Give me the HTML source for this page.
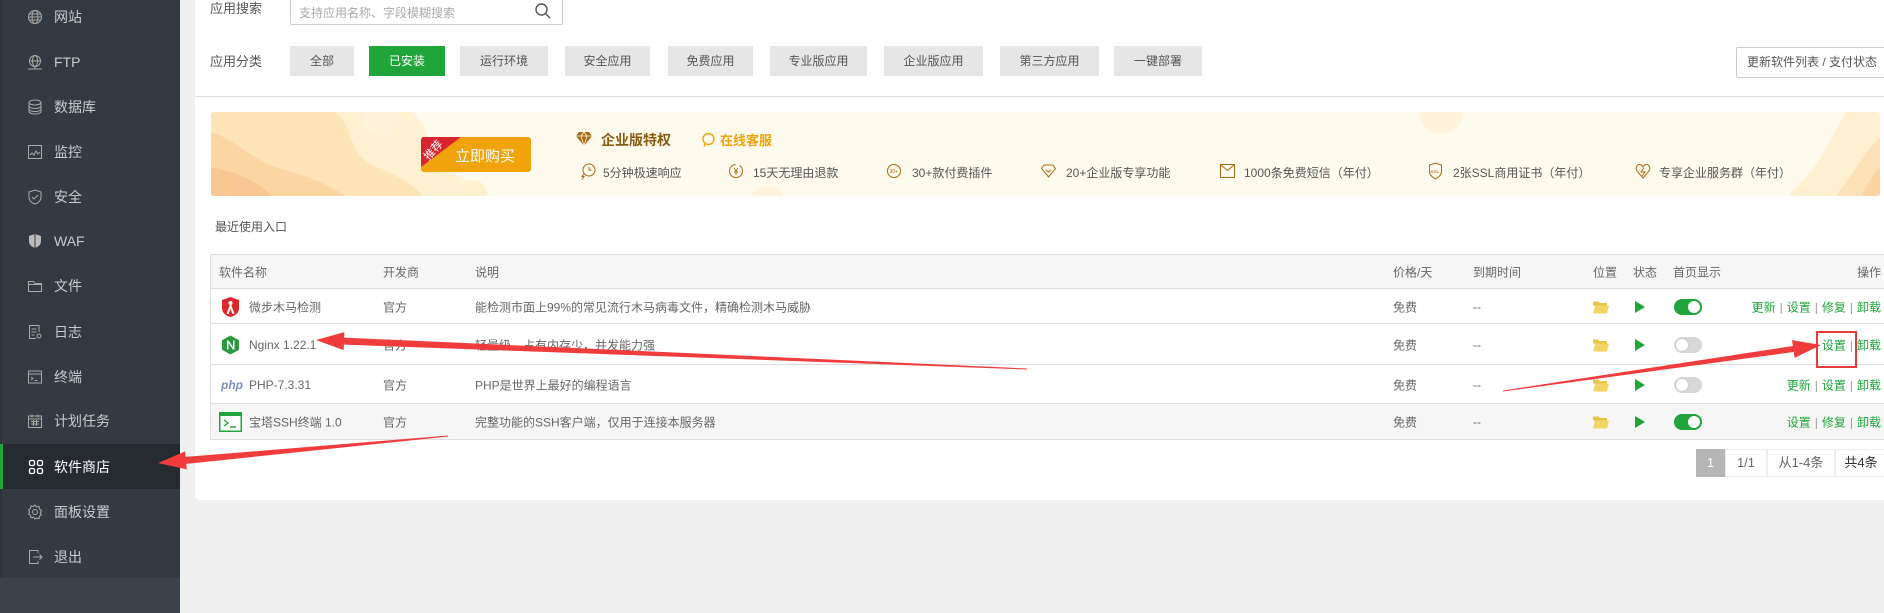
<!DOCTYPE html>
<html><head><meta charset="utf-8"><style>
*{margin:0;padding:0;box-sizing:border-box}
body{width:1884px;height:613px;overflow:hidden;background:#f0f0f0;font-family:"Liberation Sans","Noto Sans CJK SC",sans-serif;font-size:12px;color:#666;position:relative}
.a{position:absolute;white-space:nowrap}
#side{position:absolute;left:0;top:0;width:180px;height:613px;background:#3b424b}
#side .list{position:absolute;left:0;top:0;width:180px;height:578px;background:#333a42;border-left:2px solid #2e343b}
.it{position:absolute;left:0;width:180px;height:45px;color:#c8ccd0;font-size:14px}
.it span{position:absolute;left:54px;top:50%;transform:translateY(-50%)}
.it svg{position:absolute;left:27px;top:50%;transform:translateY(-50%)}
.it.on{background:#262b31;border-left:3px solid #20a53a;left:0;color:#fff}
.it.on svg{left:25px}
.it.on span{left:51px}
#panel{position:absolute;left:195px;top:0;width:1689px;height:500px;background:#fff;border-radius:0 0 0 5px}
.btn{position:absolute;top:46px;height:30px;line-height:30px;background:#e6e6e6;color:#555;text-align:center;font-size:12px}
.row{position:absolute;left:210px;width:1674px;border-bottom:1px solid #ddd}
.c{position:absolute;top:50%;transform:translateY(-50%);white-space:nowrap}
.act{right:3px;color:#20a53a}
.act i{font-style:normal;color:#999;margin:0 4px}
.tg{position:absolute;left:1674px;top:50%;transform:translateY(-50%);width:28px;height:16px;border-radius:8px}
.tg.on{background:#20a53a}.tg.off{background:#d8d8d8}
.tg b{position:absolute;top:2px;width:12px;height:12px;border-radius:50%;background:#fff}
.tg.on b{right:2px}.tg.off b{left:2px;box-shadow:0 0 1px #999}
.fd{left:1593px}.pl{left:1635px}
.feat{position:absolute;top:164px;font-size:12px;color:#555}
</style></head><body>
<div id="side"><div class="list"></div>
<div class="it" style="top:-6px"><svg width="16" height="16" viewBox="0 0 16 16" fill="none" stroke="#aaa" stroke-width="1"><circle cx="8" cy="8" r="6.5"/><ellipse cx="8" cy="8" rx="3" ry="6.5"/><path d="M1.5 8h13M2.5 5h11M2.5 11h11"/></svg><span>网站</span></div>
<div class="it" style="top:39px"><svg width="16" height="16" viewBox="0 0 16 16" fill="none" stroke="#aaa"><circle cx="8" cy="7" r="5.5"/><ellipse cx="8" cy="7" rx="2.5" ry="5.5"/><path d="M2.5 7h11M1 15h14M8 12.5v2"/></svg><span>FTP</span></div>
<div class="it" style="top:84px"><svg width="16" height="16" viewBox="0 0 16 16" fill="none" stroke="#aaa"><ellipse cx="8" cy="3.5" rx="6" ry="2.5"/><path d="M2 3.5v9c0 1.4 2.7 2.5 6 2.5s6-1.1 6-2.5v-9M2 7c0 1.4 2.7 2.5 6 2.5S14 8.4 14 7M2 10c0 1.4 2.7 2.5 6 2.5s6-1.1 6-2.5"/></svg><span>数据库</span></div>
<div class="it" style="top:129px"><svg width="16" height="16" viewBox="0 0 16 16" fill="none" stroke="#aaa"><rect x="1.5" y="1.5" width="13" height="13"/><path d="M3 11l2-2 2 2 2-4 2 3 2-2"/></svg><span>监控</span></div>
<div class="it" style="top:174px"><svg width="16" height="16" viewBox="0 0 16 16" fill="none" stroke="#aaa"><path d="M8 1l6 2v5c0 4-3 6-6 7-3-1-6-3-6-7V3z"/><path d="M5 8l2 2 4-4"/></svg><span>安全</span></div>
<div class="it" style="top:218px"><svg width="16" height="16" viewBox="0 0 16 16"><path d="M8 1l6 2v5c0 4-3 6-6 7-3-1-6-3-6-7V3z" fill="#bbb"/><path d="M8 1v14" stroke="#333a42"/></svg><span>WAF</span></div>
<div class="it" style="top:263px"><svg width="16" height="16" viewBox="0 0 16 16" fill="none" stroke="#aaa"><path d="M1.5 3.5h5l1.5 2h6.5v8h-13z"/><path d="M1.5 6.5h13"/></svg><span>文件</span></div>
<div class="it" style="top:309px"><svg width="16" height="16" viewBox="0 0 16 16" fill="none" stroke="#aaa"><path d="M12 8V1.5H2.5v13H9M4.5 5h5M4.5 8h5M4.5 11h3"/><circle cx="12" cy="12" r="2"/></svg><span>日志</span></div>
<div class="it" style="top:354px"><svg width="16" height="16" viewBox="0 0 16 16" fill="none" stroke="#aaa"><rect x="1.5" y="2" width="13" height="12"/><path d="M1.5 5h13M4 8l2 1.5L4 11M7.5 11.5h3"/></svg><span>终端</span></div>
<div class="it" style="top:398px"><svg width="16" height="16" viewBox="0 0 16 16" fill="none" stroke="#aaa"><rect x="1.5" y="3" width="13" height="11.5"/><path d="M1.5 6h13M5 1.5v3M11 1.5v3M4 8.5h8M4 11h8M6.5 7v6M9.5 7v6"/></svg><span>计划任务</span></div>
<div class="it on" style="top:444px"><svg width="16" height="16" viewBox="0 0 16 16" fill="none" stroke="#fff" stroke-width="1.3"><rect x="1.5" y="1.5" width="5" height="5" rx="1.5"/><rect x="9.5" y="1.5" width="5" height="5" rx="1.5"/><rect x="1.5" y="9.5" width="5" height="5" rx="1.5"/><rect x="9.5" y="9.5" width="5" height="5" rx="1.5"/></svg><span>软件商店</span></div>
<div class="it" style="top:489px"><svg width="16" height="16" viewBox="0 0 16 16" fill="none" stroke="#aaa"><circle cx="8" cy="8" r="2.5"/><path d="M8 1l1.5 2 2.5-.5.5 2.5 2 1.5-1.2 2.2 1.2 2.3-2 1.2-.5 2.5-2.5-.5L8 15l-1.5-1.8-2.5.5-.5-2.5-2-1.2L2.7 8 1.5 5.8l2-1.3.5-2.5 2.5.5z"/></svg><span>面板设置</span></div>
<div class="it" style="top:534px"><svg width="16" height="16" viewBox="0 0 16 16" fill="none" stroke="#aaa"><path d="M11 4V1.5H2.5v13H11V12M6 8h9M12.5 5.5L15 8l-2.5 2.5"/></svg><span>退出</span></div>
</div>

<div id="panel"></div>
<div class="a" style="left:210px;top:0;font-size:13px;color:#555;line-height:18px">应用搜索</div>
<div class="a" style="left:290px;top:-2px;width:273px;height:27px;border:1px solid #ccc;border-radius:2px;background:#fff"><span class="a" style="left:8px;top:5px;color:#aaa;font-size:12px">支持应用名称、字段模糊搜索</span><svg class="a" style="right:10px;top:3px" width="18" height="18" viewBox="0 0 18 18" fill="none" stroke="#555" stroke-width="1.4"><circle cx="7.5" cy="7.5" r="5.5"/><path d="M11.5 11.5l4.5 4.5"/></svg></div>
<div class="a" style="left:210px;top:51px;font-size:13px;color:#555">应用分类</div>
<div class="btn" style="left:290px;width:64px">全部</div>
<div class="btn" style="left:369px;width:76px;background:#20a53a;color:#fff">已安装</div>
<div class="btn" style="left:460px;width:88px">运行环境</div>
<div class="btn" style="left:565px;width:85px">安全应用</div>
<div class="btn" style="left:668px;width:85px">免费应用</div>
<div class="btn" style="left:770px;width:97px">专业版应用</div>
<div class="btn" style="left:884px;width:99px">企业版应用</div>
<div class="btn" style="left:1000px;width:99px">第三方应用</div>
<div class="btn" style="left:1114px;width:88px">一键部署</div>
<div class="a" style="left:1736px;top:47px;width:150px;height:31px;border:1px solid #ccc;border-radius:2px;line-height:29px;padding-left:10px;color:#555;background:#fff">更新软件列表 / 支付状态</div>
<div class="a" style="left:195px;top:96px;width:1689px;height:1px;background:#ddd"></div>

<!-- banner -->
<div class="a" style="left:211px;top:112px;width:1669px;height:84px;background:#fffaee;border-radius:3px;overflow:hidden">
<svg class="a" style="left:0;top:0" width="1669" height="84">
<path d="M0 0H200C225 20 215 45 240 60 258 70 270 78 275 84H0z" fill="#fff1d2"/>
<path d="M0 0H125C145 20 135 40 165 55 190 65 205 75 212 84H0z" fill="#fee5b8"/>
<path d="M0 20C30 30 40 50 80 60 110 68 128 80 135 84H0z" fill="#fcd6a2"/>
<path d="M0 55C25 60 50 70 60 84H0z" fill="#f9c892"/>
<circle cx="262" cy="82" r="14" fill="#fff0d0"/>
<circle cx="171" cy="4" r="20" fill="#fff3dc"/>
<circle cx="1230" cy="0" r="22" fill="#fff3dc"/>
<circle cx="556" cy="92" r="18" fill="#fff3dc"/>
<path d="M1669 0H1635C1620 25 1610 50 1595 65 1585 75 1580 80 1578 84H1669z" fill="#fff0d2"/>
<path d="M1669 25C1650 45 1640 65 1625 84H1669z" fill="#fde2b8"/>
<path d="M1669 55C1660 65 1655 75 1650 84H1669z" fill="#fbd4a2"/>
</svg>
</div>
<div class="a" style="left:421px;top:137px;width:110px;height:35px;background:#f0a30a;border-radius:3px;overflow:hidden">
<svg class="a" style="left:0;top:0" width="44" height="32"><path d="M0 0H40L0 30z" fill="#d9242f"/></svg>
<span class="a" style="color:#fff;font-size:11px;transform:rotate(-48deg);left:1px;top:5px">推荐</span>
<span class="a" style="left:34px;top:8px;color:#fff;font-size:15px">立即购买</span></div>
<svg class="a" style="left:576px;top:132px" width="16" height="14" viewBox="0 0 16 14"><path d="M3 0h10l3 4-8 10L0 4z" fill="#a8690f"/><path d="M0 4h16M5 4l3 10 3-10M5 4l3-4 3 4" stroke="#fffaee" stroke-width=".8" fill="none"/></svg>
<div class="a" style="left:601px;top:130px;font-size:14px;font-weight:bold;color:#8a5a10">企业版特权</div>
<svg class="a" style="left:701px;top:132px" width="15" height="15" viewBox="0 0 15 15" fill="none" stroke="#f0a30a" stroke-width="1.4"><circle cx="7.5" cy="7" r="5.5"/><path d="M4 12l-1 2.5"/></svg>
<div class="a" style="left:720px;top:130px;font-size:13px;font-weight:bold;color:#f0a30a">在线客服</div>
<svg class="a" style="left:579px;top:163px" width="18" height="18" viewBox="0 0 18 18" fill="none" stroke="#a8690f"><circle cx="10" cy="7" r="6"/><path d="M10 4v3h2.5M5 11l-2 2.5h2l-2 3"/></svg>
<div class="feat" style="left:603px">5分钟极速响应</div>
<svg class="a" style="left:728px;top:163px" width="16" height="16" viewBox="0 0 16 16" fill="none" stroke="#a8690f"><circle cx="8" cy="8" r="6.5" stroke-dasharray="30 4"/><path d="M6 5l2 3 2-3M8 8v4M6 9h4"/></svg>
<div class="feat" style="left:753px">15天无理由退款</div>
<svg class="a" style="left:886px;top:163px" width="16" height="16" viewBox="0 0 16 16" fill="none" stroke="#a8690f"><circle cx="8" cy="8" r="6.5"/><text x="3.5" y="10" font-size="5" fill="#a8690f" stroke="none">30+</text></svg>
<div class="feat" style="left:912px">30+款付费插件</div>
<svg class="a" style="left:1041px;top:164px" width="15" height="14" viewBox="0 0 15 14" fill="none" stroke="#a8690f"><path d="M3 1h9l2.5 3.5L7.5 13 .5 4.5z"/><path d="M5 6l2.5 2L10 6"/></svg>
<div class="feat" style="left:1066px">20+企业版专享功能</div>
<svg class="a" style="left:1220px;top:164px" width="15" height="14" viewBox="0 0 15 14" fill="none" stroke="#a8690f"><rect x=".5" y=".5" width="14" height="13"/><path d="M.5 .5l7 6 7-6"/></svg>
<div class="feat" style="left:1244px">1000条免费短信（年付）</div>
<svg class="a" style="left:1428px;top:162px" width="15" height="18" viewBox="0 0 15 18" fill="none" stroke="#a8690f"><path d="M7.5 1l6 2v6c0 4-3 6.5-6 8-3-1.5-6-4-6-8V3z"/><text x="2.5" y="11" font-size="4.5" fill="#a8690f" stroke="none">SSL</text></svg>
<div class="feat" style="left:1453px">2张SSL商用证书（年付）</div>
<svg class="a" style="left:1635px;top:163px" width="16" height="16" viewBox="0 0 16 16" fill="none" stroke="#a8690f"><path d="M8 15L2 8C0 5 2 1 5 1.5 6.5 1.8 7.5 3 8 4 8.5 3 9.5 1.8 11 1.5 14 1 16 5 14 8z"/><path d="M9 5L6 9h4l-3 4"/></svg>
<div class="feat" style="left:1659px">专享企业服务群（年付）</div>

<div class="a" style="left:215px;top:218px;font-size:12px;color:#555">最近使用入口</div>

<!-- table -->
<div class="row" style="top:254px;height:35px;background:#f6f6f6;border:1px solid #ddd;border-right:none">
<span class="c" style="left:8px">软件名称</span><span class="c" style="left:172px">开发商</span><span class="c" style="left:264px">说明</span><span class="c" style="left:1182px">价格/天</span><span class="c" style="left:1262px">到期时间</span><span class="c" style="left:1382px">位置</span><span class="c" style="left:1422px">状态</span><span class="c" style="left:1462px">首页显示</span><span class="c" style="right:3px">操作</span></div>

<div class="row" style="top:289px;height:35px;border-left:1px solid #ddd"></div>
<div class="row" style="top:324px;height:41px;border-left:1px solid #ddd"></div>
<div class="row" style="top:365px;height:39px;border-left:1px solid #ddd"></div>
<div class="row" style="top:404px;height:36px;border-left:1px solid #ddd;background:#f6f6f6"></div>

<div class="a" style="left:0;top:289px;width:1884px;height:151px">
 <div class="a" style="left:0;top:0;width:1884px;height:35px">
  <svg class="c" style="left:222px" width="17" height="20" viewBox="0 0 17 20"><path d="M8.5 0L17 3v8c0 5-4 8-8.5 9C4 19 0 16 0 11V3z" fill="#e0262b"/><path d="M8.5 6l-4 11h2l2-5 2 5h2z" fill="#fff"/><circle cx="8.5" cy="6" r="2" fill="#fff"/></svg>
  <span class="c" style="left:249px">微步木马检测</span><span class="c" style="left:383px">官方</span><span class="c" style="left:475px">能检测市面上99%的常见流行木马病毒文件，精确检测木马威胁</span><span class="c" style="left:1393px">免费</span><span class="c" style="left:1473px">--</span>
 </div>
 <div class="a" style="left:0;top:35px;width:1884px;height:41px">
  <svg class="c" style="left:222px" width="17" height="19" viewBox="0 0 17 19"><path d="M8.5 0l8.5 4.75v9.5L8.5 19 0 14.25v-9.5z" fill="#2a9a3e"/><path d="M5 14V5h1.5l4.5 6.5V5h1.5v9H11L6.5 7.5V14z" fill="#fff"/></svg>
  <span class="c" style="left:249px">Nginx 1.22.1</span><span class="c" style="left:383px">官方</span><span class="c" style="left:475px">轻量级，占有内存少，并发能力强</span><span class="c" style="left:1393px">免费</span><span class="c" style="left:1473px">--</span>
 </div>
 <div class="a" style="left:0;top:76px;width:1884px;height:39px">
  <span class="c" style="left:221px;color:#7b8fc4;font-weight:bold;font-style:italic;font-size:12px">php</span>
  <span class="c" style="left:249px">PHP-7.3.31</span><span class="c" style="left:383px">官方</span><span class="c" style="left:475px">PHP是世界上最好的编程语言</span><span class="c" style="left:1393px">免费</span><span class="c" style="left:1473px">--</span>
 </div>
 <div class="a" style="left:0;top:115px;width:1884px;height:36px">
  <svg class="c" style="left:219px" width="23" height="20" viewBox="0 0 23 20"><rect x=".75" y=".75" width="21.5" height="18.5" fill="#fff" stroke="#20a53a" stroke-width="1.5"/><rect x="0" y="0" width="23" height="4" fill="#20a53a"/><path d="M5 8l4 3-4 3M11 15h6" stroke="#20a53a" stroke-width="1.4" fill="none"/></svg>
  <span class="c" style="left:249px">宝塔SSH终端 1.0</span><span class="c" style="left:383px">官方</span><span class="c" style="left:475px">完整功能的SSH客户端，仅用于连接本服务器</span><span class="c" style="left:1393px">免费</span><span class="c" style="left:1473px">--</span>
 </div>
</div>

<div class="a" style="left:0;top:289px;width:1884px;height:35px">
 <svg class="c fd" width="16" height="13" viewBox="0 0 16 13"><path d="M0 1h5l1.5 1.5H14V5H0z" fill="#e7c546"/><path d="M0 13L2 5h14l-2 8z" fill="#f2d665"/></svg>
 <svg class="c pl" width="10" height="12" viewBox="0 0 10 12"><path d="M0 0l10 6-10 6z" fill="#20a53a"/></svg>
 <div class="tg on"><b></b></div>
 <span class="c act">更新<i>|</i>设置<i>|</i>修复<i>|</i>卸载</span>
</div>
<div class="a" style="left:0;top:324px;width:1884px;height:41px">
 <svg class="c fd" width="16" height="13" viewBox="0 0 16 13"><path d="M0 1h5l1.5 1.5H14V5H0z" fill="#e7c546"/><path d="M0 13L2 5h14l-2 8z" fill="#f2d665"/></svg>
 <svg class="c pl" width="10" height="12" viewBox="0 0 10 12"><path d="M0 0l10 6-10 6z" fill="#20a53a"/></svg>
 <div class="tg off"><b></b></div>
 <span class="c act">设置<i>|</i>卸载</span>
</div>
<div class="a" style="left:0;top:365px;width:1884px;height:39px">
 <svg class="c fd" width="16" height="13" viewBox="0 0 16 13"><path d="M0 1h5l1.5 1.5H14V5H0z" fill="#e7c546"/><path d="M0 13L2 5h14l-2 8z" fill="#f2d665"/></svg>
 <svg class="c pl" width="10" height="12" viewBox="0 0 10 12"><path d="M0 0l10 6-10 6z" fill="#20a53a"/></svg>
 <div class="tg off"><b></b></div>
 <span class="c act">更新<i>|</i>设置<i>|</i>卸载</span>
</div>
<div class="a" style="left:0;top:404px;width:1884px;height:36px">
 <svg class="c fd" width="16" height="13" viewBox="0 0 16 13"><path d="M0 1h5l1.5 1.5H14V5H0z" fill="#e7c546"/><path d="M0 13L2 5h14l-2 8z" fill="#f2d665"/></svg>
 <svg class="c pl" width="10" height="12" viewBox="0 0 10 12"><path d="M0 0l10 6-10 6z" fill="#20a53a"/></svg>
 <div class="tg on"><b></b></div>
 <span class="c act">设置<i>|</i>修复<i>|</i>卸载</span>
</div>

<div class="a" style="left:1696px;top:449px;width:29px;height:28px;background:#b5b5b5;color:#fff;text-align:center;line-height:28px;font-size:13px">1</div>
<div class="a" style="left:1725px;top:449px;width:42px;height:28px;border:1px solid #eee;text-align:center;line-height:26px;font-size:13px;color:#666">1/1</div>
<div class="a" style="left:1767px;top:449px;width:68px;height:28px;border:1px solid #eee;text-align:center;line-height:26px;font-size:13px;color:#666">从1-4条</div>
<div class="a" style="left:1835px;top:449px;width:52px;height:28px;border:1px solid #eee;text-align:center;line-height:26px;font-size:13px;color:#333">共4条</div>

<svg class="a" style="left:0;top:0" width="1884" height="613">
<polygon points="1027,368.5 344.1,337.6 344.4,332.1 316,340 343.6,350.1 343.9,344.6 1027,369.5" fill="#f03c3c"/>
<polygon points="448,435.5 185.6,456.9 185.1,451.4 158,463 186.7,469.4 186.2,463.9 448,436.5" fill="#f03c3c"/>
<polygon points="1503,390.5 1792.9,346 1792,340.1 1821,345 1794.6,357.9 1793.7,352 1503,391.5" fill="#f03c3c"/>
<rect x="1817" y="332" width="39" height="35" fill="none" stroke="#e83a3a" stroke-width="2"/>
</svg>
</body></html>
